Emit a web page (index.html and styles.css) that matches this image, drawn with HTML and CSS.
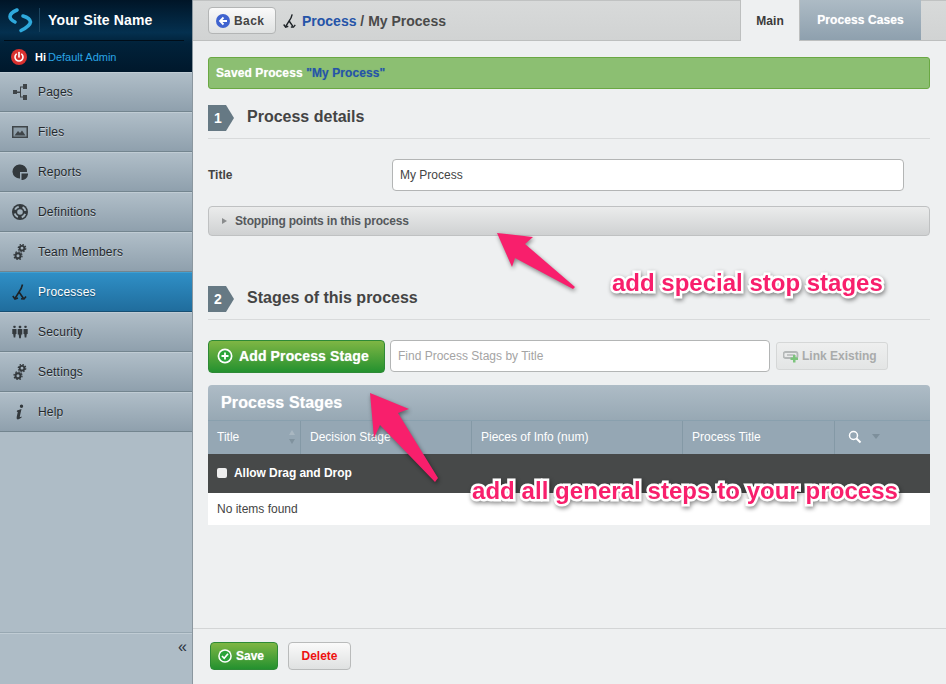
FILE: index.html
```html
<!DOCTYPE html>
<html lang="en">
  <head>
    <meta charset="UTF-8" />
    <title>My Process</title>
    <link rel="stylesheet" href="styles.css">
  </head>
  <body>
    <div class="app">
      <aside class="sidebar">
        <div class="brand">
          <div class="brand-top">
            <svg class="logo" viewBox="0 0 26 26" width="26" height="26">
              <path d="M10 3 Q3 6 3 9.500 Q3 12.500 8 15" fill="none" stroke="#2fa9dc" stroke-width="3.600" stroke-linecap="round" />
              <path d="M16 9 Q23 11 23.500 15 Q23 19 14 23.500" fill="none" stroke="#2fa9dc" stroke-width="3.600" stroke-linecap="round" />
            </svg>
            <span class="brand-name">Your Site Name</span>
          </div>
          <div class="brand-user">
            <span class="power">
              <svg viewBox="0 0 16 16" width="16" height="16">
                <path d="M5.200 5.200 A4 4 0 1 0 10.800 5.200" fill="none" stroke="#fff" stroke-width="1.600" stroke-linecap="round" />
                <path d="M8 3.600 V8" stroke="#fff" stroke-width="1.600" stroke-linecap="round" />
              </svg>
            </span>
            <span class="hi">Hi</span> <a class="user-link" href="#">Default Admin</a>
          </div>
        </div>
        <nav class="nav">
          <a class="nav-item" href="#">
            <svg class="nav-icon" viewBox="0 0 16 16" width="16" height="16"><path d="M1 6h4v4H1zM5 7.500h3V2.500h3V0h4v5h-4V3.500H9v9h2V11h4v5h-4v-2.500H8v-4.500H5z" fill="#3f4549"/></svg>
            Pages
          </a>
          <a class="nav-item" href="#">
            <svg class="nav-icon" viewBox="0 0 16 12" width="16" height="12"><path d="M0 0h16v12H0z" fill="#3f4549"/><path d="M1.500 1.500h13v9h-13z" fill="#8e9ea9"/><path d="M2.500 9.500 L6 5 L8 7 L10 4.500 L13.500 9.500z" fill="#3f4549"/></svg>
            Files
          </a>
          <a class="nav-item" href="#">
            <svg class="nav-icon" viewBox="0 0 16 16" width="16" height="16"><path d="M7 0.500a7 7 0 1 0 1 14V8h7a7 7 0 0 0-8-7.500z" fill="#33393d"/><path d="M9.500 9.500h6.500v1a6 6 0 0 1-6.500 5.500z" fill="#33393d"/></svg>
            Reports
          </a>
          <a class="nav-item" href="#">
            <svg class="nav-icon" viewBox="0 0 16 16" width="16" height="16"><circle cx="8" cy="8" r="8" fill="#33393d"/><circle cx="8" cy="8" r="5.500" fill="none" stroke="#a3b2bc" stroke-width="2" stroke-dasharray="4.600 4.040" stroke-dashoffset="-2.020"/><circle cx="8" cy="8" r="2.800" fill="#a3b2bc"/></svg>
            Definitions
          </a>
          <a class="nav-item" href="#">
            <svg class="nav-icon" viewBox="0 0 16 16" width="16" height="16"><use href="#gears"/></svg>
            Team Members
          </a>
          <a class="nav-item nav-item-active" href="#">
            <svg class="nav-icon" viewBox="0 0 16 16" width="16" height="16"><use href="#fork" /></svg>
            Processes
          </a>
          <a class="nav-item" href="#">
            <svg class="nav-icon" viewBox="0 0 16 13" width="16" height="13"><path d="M2.500 0a1.300 1.300 0 1 1 0 2.600a1.300 1.300 0 1 1 0-2.600zM0.300 3.500h4.200v5h-.8L3.300 12H1.700L1.200 8.500H.3zM8 0a1.400 1.400 0 1 1 0 2.800a1.400 1.400 0 1 1 0-2.800zM5.700 3.500h4.600v5.500h-1L8.800 13H7.200L6.700 9h-1zM13.500 0a1.300 1.300 0 1 1 0 2.600a1.300 1.300 0 1 1 0-2.600zM11.500 3.500h4.200v5h-.9L14.300 12h-1.600l-.4-3.500h-.8z" fill="#33393d"/></svg>
            Security
          </a>
          <a class="nav-item" href="#">
            <svg class="nav-icon" viewBox="0 0 16 16" width="16" height="16"><use href="#gears"/></svg>
            Settings
          </a>
          <a class="nav-item" href="#">
            <svg class="nav-icon" viewBox="0 0 16 16" width="16" height="16"><path d="M9.500 0.500a1.700 1.700 0 1 1 0 3.400a1.700 1.700 0 1 1 0-3.400zM5 6.500 L9.500 5 L7.800 12.500 Q7.800 13.500 9.500 12.500 L9.800 13.300 Q7 15.800 5.300 15.300 Q4.300 14.800 4.700 13 L5.800 8 L4.800 7.800z" fill="#33393d"/></svg>
            Help
          </a>
        </nav>
        <div class="collapse">«</div>
      </aside>

      <main class="content">
        <div class="topbar">
          <a class="btn-back" href="#">
            <svg viewBox="0 0 14 14" width="14" height="14"><circle cx="7" cy="7" r="7" fill="#3f63cf"/><path d="M7.500 3.500 L4 7 L7.500 10.500 M4.500 7 H11" fill="none" stroke="#fff" stroke-width="1.800"/></svg>
            Back
          </a>
          <svg class="crumb-icon" viewBox="0 0 16 16" width="14" height="16"><use href="#fork" /></svg>
          <span class="crumb"><a href="#">Process</a> / My Process</span>
          <div class="tabs">
            <a class="tab tab-active" href="#">Main</a>
            <a class="tab" href="#">Process Cases</a>
          </div>
        </div>

        <div class="body">
          <div class="alert">Saved Process <b>"My Process"</b></div>

          <div class="step">
            <span class="step-num">1</span>
            <h2>Process details</h2>
          </div>
          <div class="field">
            <label class="field-label" for="title">Title</label>
            <input class="text-input title-input" id="title" value="My Process" />
          </div>
          <div class="accordion"><span class="caret"></span>Stopping points in this process</div>

          <div class="step step-second">
            <span class="step-num">2</span>
            <h2>Stages of this process</h2>
          </div>
          <div class="toolbar">
            <a class="btn-add" href="#">
              <svg viewBox="0 0 16 16" width="16" height="16"><circle cx="8" cy="8" r="7.500" fill="#fff"/><circle cx="8" cy="8" r="5.800" fill="#2aa43a"/><path d="M8 4.500v7M4.500 8h7" stroke="#fff" stroke-width="1.800"/></svg>
              Add Process Stage
            </a>
            <input class="text-input find-input" placeholder="Find Process Stags by Title" />
            <a class="btn-link" href="#">
              <svg viewBox="0 0 16 14" width="16" height="14"><rect x="0.500" y="3" width="14" height="6" rx="2" fill="none" stroke="#b4b8b8" stroke-width="1.800"/><path d="M4 6h8" stroke="#b4b8b8" stroke-width="1.500"/><path d="M11 7h2.500v2.500H16V12h-2.500v2.500H11V12H8.500V9.500H11z" fill="#7cc47c" transform="translate(-1,-1)"/></svg>
              Link Existing
            </a>
          </div>

          <div class="stages">
            <div class="stages-title">Process Stages</div>
            <div class="stages-cols">
              <div class="col col-title">Title<span class="sort"></span></div>
              <div class="col col-decision">Decision Stage</div>
              <div class="col col-pieces">Pieces of Info (num)</div>
              <div class="col col-process">Process Title</div>
              <div class="col col-search">
                <svg viewBox="0 0 14 14" width="14" height="14"><circle cx="5.500" cy="5.500" r="4" fill="none" stroke="#fff" stroke-width="1.500"/><path d="M8.500 8.500 L12.500 12.500" stroke="#fff" stroke-width="2"/></svg>
                <span class="search-caret"></span>
              </div>
            </div>
            <div class="stages-drag"><span class="check"></span>Allow Drag and Drop</div>
            <div class="stages-empty">No items found</div>
          </div>
        </div>

        <div class="actions">
          <a class="btn-save" href="#">
            <svg viewBox="0 0 14 14" width="14" height="14"><circle cx="7" cy="7" r="6.800" fill="#fff"/><circle cx="7" cy="7" r="5.300" fill="#2aa43a"/><path d="M4 7 L6.200 9.300 L10 4.800" fill="none" stroke="#fff" stroke-width="1.700"/></svg>
            Save
          </a>
          <a class="btn-delete" href="#">Delete</a>
        </div>
      </main>
    </div>

    <!-- annotations drawn on top of the screenshot -->
    <svg class="arrows" viewBox="0 0 946 684" width="946" height="684">
      <path d="M497 233 L533 237 L525 244 L575 287 L573 289 L515 258 L512 267z" fill="#f81f6c"/>
      <path d="M370 393 L409 409 L398 413 L438 478 L435 482 L380 425 L374 438z" fill="#f81f6c"/>
    </svg>
    <div class="note note-stop">add special stop stages</div>
    <div class="note note-steps">add all general steps to your process</div>

    <svg class="defs" width="0" height="0">
      <defs>
        <g id="gears">
          <circle cx="10" cy="4.200" r="2.300" fill="none" stroke="#33393d" stroke-width="1.800"/>
          <circle cx="10" cy="4.200" r="3.700" fill="none" stroke="#33393d" stroke-width="1.300" stroke-dasharray="1.500 1.400"/>
          <circle cx="6" cy="11.800" r="2.500" fill="none" stroke="#33393d" stroke-width="2"/>
          <circle cx="6" cy="11.800" r="4" fill="none" stroke="#33393d" stroke-width="1.300" stroke-dasharray="1.500 1.640"/>
        </g>
        <g id="fork" fill="none" stroke="#1d2226" stroke-width="1.600">
          <path d="M10.500 0.500 Q9.500 5 7 8 L3 14.500 M7 8 L11.500 14.500"/>
          <path d="M0.800 12 L3 15 L6 14 M9 14.800 L12 15 L14 12.500"/>
        </g>
      </defs>
    </svg>
  </body>
</html>
```

FILE: styles.css
```css
/* Общие стили */
* {
  margin: 0;
  padding: 0;
  box-sizing: border-box;
}

body {
  position: relative;
  width: 946px;
  height: 684px;
  overflow: hidden;
  font-family: "Liberation Sans", Arial, sans-serif;
  font-size: 12px;
  color: #444;
  background-color: #eef0f1;
}

a {
  text-decoration: none;
}

.app {
  display: flex;
  height: 684px;
}

/* Sidebar */
.sidebar {
  display: flex;
  flex-direction: column;
  width: 193px;
  flex-shrink: 0;
  background-color: #aebcc6;
  border-right: 1px solid #8b979f;
}

.brand {
  height: 72px;
  background: linear-gradient(180deg, #001527 0%, #04304f 45%, #01223a 60%, #00182c 100%);
}

.brand-top {
  display: flex;
  align-items: center;
  height: 41px;
  margin: 0 8px 0 4px;
  padding-left: 3px;
  border-bottom: 1px solid #000d18;
}

.logo {
  margin-right: 6px;
}

.brand-name {
  padding-left: 8px;
  border-left: 1px solid #1d4560;
  line-height: 24px;
  font-size: 14px;
  font-weight: bold;
  letter-spacing: 0.15px;
  color: #fff;
}

.brand-user {
  display: flex;
  align-items: center;
  gap: 2px;
  height: 31px;
  padding-left: 11px;
  font-size: 11px;
  color: #fff;
}

.power {
  display: flex;
  align-items: center;
  justify-content: center;
  width: 16px;
  height: 16px;
  margin-right: 6px;
  border-radius: 50%;
  background-color: #d9312f;
}

.hi {
  font-weight: bold;
}

.user-link {
  color: #2aa5e6;
}

.nav {
  flex-grow: 1;
}

.nav-item {
  position: relative;
  display: flex;
  align-items: center;
  height: 40px;
  padding-left: 38px;
  color: #24292d;
  font-size: 12px;
  letter-spacing: 0.2px;
  text-shadow: 0 1px 0 rgba(255, 255, 255, 0.45);
  background: linear-gradient(180deg, #b0bec8, #8fa0ad);
  border-top: 1px solid #c0ccd4;
  border-bottom: 1px solid #73858f;
}

.nav-icon {
  position: absolute;
  left: 12px;
  top: 50%;
  transform: translateY(-50%);
}

.nav-item-active {
  color: #fff;
  text-shadow: 0 1px 1px rgba(0, 0, 0, 0.4);
  background: linear-gradient(180deg, #2f8fc6, #206d9d);
  border-top-color: #3f9fd2;
  border-bottom-color: #174f73;
}

.collapse {
  height: 51px;
  padding: 4px 5px 0 0;
  border-top: 1px solid #c0ccd4;
  box-shadow: 0 -1px 0 #98a8b2;
  text-align: right;
  font-size: 16px;
  line-height: 18px;
  color: #2c3440;
}

/* Content */
.content {
  display: flex;
  flex-direction: column;
  flex-grow: 1;
  min-width: 0;
}

.topbar {
  display: flex;
  align-items: center;
  height: 41px;
  padding-left: 15px;
  background: linear-gradient(180deg, #d8dada, #d1d3d3);
  border-top: 1px solid #c0c2c2;
  border-bottom: 1px solid #bdbfbf;
}

.btn-back {
  display: flex;
  align-items: center;
  gap: 4px;
  height: 27px;
  width: 68px;
  padding-left: 7px;
  margin-right: 7px;
  color: #444;
  font-weight: bold;
  font-size: 12px;
  letter-spacing: 0.4px;
  background: linear-gradient(180deg, #fafafa, #dfe1e1);
  border: 1px solid #b3b5b5;
  border-radius: 4px;
}

.crumb-icon {
  margin-right: 5px;
}

.crumb {
  font-size: 14px;
  font-weight: bold;
  color: #4a4a4a;
}

.crumb a {
  color: #2554a8;
}

.tabs {
  display: flex;
  align-self: flex-end;
  margin-left: auto;
  margin-right: 25px;
  height: 40px;
}

.tab {
  display: flex;
  align-items: center;
  justify-content: center;
  width: 121px;
  font-size: 12px;
  font-weight: bold;
  letter-spacing: 0.1px;
  color: #fff;
  text-shadow: 0 0 1px rgba(255, 255, 255, 0.6);
  background: linear-gradient(180deg, #adbbc5, #8ea0ae);
}

.tab-active {
  width: 60px;
  color: #3a3a3a;
  text-shadow: none;
  background: #eef0f1;
  border-left: 1px solid #bdbfbf;
  border-right: 1px solid #bdbfbf;
  margin-bottom: -1px;
}

.body {
  flex-grow: 1;
  padding: 16px 16px 0 15px;
}

.alert {
  height: 32px;
  padding-left: 7px;
  line-height: 30px;
  font-size: 12px;
  font-weight: bold;
  letter-spacing: 0.1px;
  color: #fff;
  text-shadow: 0 0 1px rgba(255, 255, 255, 0.6);
  background-color: #8cbf72;
  border: 1px solid #6aa843;
  border-radius: 3px;
}

.alert b {
  color: #2554a8;
  text-shadow: 0 0 1px rgba(37, 84, 168, 0.4);
}

.step {
  display: flex;
  align-items: center;
  gap: 13px;
  height: 34px;
  margin-top: 16px;
  padding-bottom: 7px;
  border-bottom: 1px solid #d8dadb;
}

.step-second {
  margin-top: 50px;
}

.step-num {
  display: flex;
  align-items: center;
  padding-left: 6px;
  width: 26px;
  height: 26px;
  font-size: 14px;
  font-weight: bold;
  color: #fff;
  background-color: #667984;
  clip-path: polygon(0 0, 18px 0, 26px 50%, 18px 100%, 0 100%);
}

.step h2 {
  padding-bottom: 2px;
  font-size: 16px;
  font-weight: bold;
  color: #444;
}

.field {
  display: flex;
  align-items: center;
  margin-top: 20px;
}

.field-label {
  width: 184px;
  font-weight: bold;
  font-size: 12px;
  color: #444;
}

.text-input {
  height: 32px;
  padding: 0 7px;
  font-family: "Liberation Sans", Arial, sans-serif;
  font-size: 12px;
  color: #444;
  background-color: #fff;
  border: 1px solid #b3b5b5;
  border-radius: 4px;
}

.text-input::placeholder {
  color: #a4a4a4;
}

.title-input {
  width: 512px;
}

.accordion {
  display: flex;
  align-items: center;
  height: 30px;
  margin-top: 15px;
  padding-left: 13px;
  font-size: 12px;
  font-weight: bold;
  letter-spacing: -0.18px;
  color: #55595c;
  background: linear-gradient(180deg, #ebecec, #cfd1d2);
  border: 1px solid #bfc1c2;
  border-radius: 4px;
}

.caret {
  width: 0;
  height: 0;
  margin-right: 8px;
  border-left: 5px solid #8a8c8d;
  border-top: 3.5px solid transparent;
  border-bottom: 3.5px solid transparent;
}

.toolbar {
  display: flex;
  align-items: flex-start;
  margin-top: 20px;
}

.btn-add {
  display: flex;
  align-items: center;
  gap: 6px;
  width: 177px;
  height: 33px;
  padding: 0 0 1px 8px;
  font-size: 14px;
  font-weight: bold;
  letter-spacing: 0.13px;
  color: #fff;
  text-shadow: 0 0 1px rgba(255, 255, 255, 0.6);
  background: linear-gradient(180deg, #7fb644, #24912f);
  border: 1px solid #2e8a36;
  border-radius: 4px;
}

.find-input {
  width: 380px;
  margin-left: 5px;
}

.btn-link {
  display: flex;
  align-items: center;
  gap: 3px;
  width: 112px;
  height: 28px;
  margin: 2px 0 0 6px;
  padding-left: 6px;
  font-size: 12px;
  font-weight: bold;
  color: #a9abab;
  background: linear-gradient(180deg, #eeefef, #e3e5e5);
  border: 1px solid #d5d7d7;
  border-radius: 3px;
}

.stages {
  margin-top: 12px;
  border-radius: 4px 4px 0 0;
  overflow: hidden;
}

.stages-title {
  height: 36px;
  padding-left: 13px;
  line-height: 35px;
  font-size: 16px;
  font-weight: bold;
  letter-spacing: 0.15px;
  color: #fff;
  text-shadow: 0 0 1px rgba(255, 255, 255, 0.6);
  background: linear-gradient(180deg, #aebcc6, #97a8b4);
  border-bottom: 1px solid #89a0ae;
}

.stages-cols {
  display: flex;
  height: 33px;
  background-color: #95a7b4;
  color: #fff;
  font-size: 12px;
}

.col {
  position: relative;
  display: flex;
  align-items: center;
  padding: 0 0 2px 9px;
  border-right: 1px solid #8499a6;
}

.col-title {
  width: 93px;
}

.col-decision {
  width: 171px;
}

.col-pieces {
  width: 211px;
}

.col-process {
  width: 152px;
}

.col-search {
  flex-grow: 1;
  padding-left: 13px;
  gap: 10px;
  border-right: 0;
}

.sort::before,
.sort::after {
  content: "";
  position: absolute;
  right: 5px;
  border-left: 3.5px solid transparent;
  border-right: 3.5px solid transparent;
}

.sort::before {
  top: 9px;
  border-bottom: 5px solid #a9b7c1;
}

.sort::after {
  top: 18px;
  border-top: 5px solid #80929e;
}

.search-caret {
  width: 0;
  height: 0;
  border-top: 5px solid #7d8f9b;
  border-left: 4px solid transparent;
  border-right: 4px solid transparent;
}

.stages-drag {
  display: flex;
  align-items: center;
  height: 39px;
  padding: 0 0 2px 9px;
  font-size: 12px;
  font-weight: bold;
  letter-spacing: -0.05px;
  color: #fff;
  background-color: #474949;
}

.check {
  width: 10px;
  height: 10px;
  margin-right: 7px;
  background-color: #eee;
  border-radius: 2px;
}

.stages-empty {
  height: 32px;
  padding-left: 9px;
  line-height: 32px;
  font-size: 12px;
  color: #444;
  background-color: #fff;
}

.actions {
  display: flex;
  gap: 10px;
  height: 56px;
  padding: 13px 0 0 17px;
  border-top: 1px solid #d3d5d6;
}

.btn-save {
  display: flex;
  align-items: center;
  gap: 4px;
  width: 68px;
  height: 28px;
  padding-left: 7px;
  font-size: 12px;
  font-weight: bold;
  color: #fff;
  text-shadow: 0 0 1px rgba(255, 255, 255, 0.6);
  background: linear-gradient(180deg, #7fb644, #24912f);
  border: 1px solid #2e8a36;
  border-radius: 4px;
}

.btn-delete {
  display: flex;
  align-items: center;
  justify-content: center;
  width: 63px;
  height: 28px;
  font-size: 12px;
  font-weight: bold;
  color: #ee1111;
  background: linear-gradient(180deg, #fafafa, #dfe1e1);
  border: 1px solid #b9bbbb;
  border-radius: 4px;
}

/* Annotations */
.arrows {
  position: absolute;
  left: 0;
  top: 0;
  filter: drop-shadow(1px 2px 2px rgba(0, 0, 0, 0.45));
  pointer-events: none;
}

.note {
  position: absolute;
  font-size: 24px;
  font-weight: bold;
  line-height: 28px;
  white-space: nowrap;
  color: #f81f6c;
  -webkit-text-stroke: 5px #fff;
  paint-order: stroke fill;
  filter: drop-shadow(1px 2px 2px rgba(0, 0, 0, 0.45));
}

.note-stop {
  left: 612px;
  top: 269px;
}

.note-steps {
  left: 472px;
  top: 477px;
  letter-spacing: 0.05px;
}

.defs {
  position: absolute;
}
```
